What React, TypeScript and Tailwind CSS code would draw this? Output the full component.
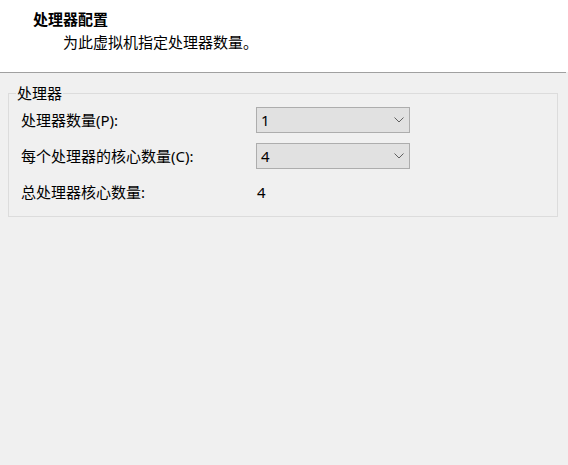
import React from "react";

function Chevron() {
  return (
    <svg width="10" height="6" viewBox="0 0 10 6" className="shrink-0">
      <polyline points="0.5,0.5 5,5 9.5,0.5" fill="none" stroke="#606060" strokeWidth="1" />
    </svg>
  );
}

function Combo({ value }: { value: string }) {
  return (
    <div className="flex items-center justify-between w-[154px] h-[26px] border border-[#adadad] bg-[#e1e1e1] pl-[4px] pr-[5px] text-black">
      <span className="leading-[20px]">{value}</span>
      <Chevron />
    </div>
  );
}

export default function App() {
  return (
    <div
      className="w-[568px] h-[465px] bg-[#f0f0f0] text-[15px] text-black overflow-hidden"
      style={{ fontFamily: '"Noto Sans", "Noto Sans CJK SC", sans-serif' }}
    >
      <div className="bg-white h-[72px] pt-[9px]">
        <div className="pl-[33px] font-bold leading-[20px]">处理器配置</div>
        <div className="pl-[63px] mt-[3px] leading-[20px]">为此虚拟机指定处理器数量。</div>
      </div>
      <div className="w-[566px] h-px bg-[#a0a0a0]" />
      <div className="pt-[20px] pl-[8px]">
        <div className="relative w-[550px] border border-[#dcdcdc] pt-[13px] pb-[11px] pl-[12px] flex flex-col gap-[10px]">
          <span className="absolute left-[7px] top-[-11px] px-[1px] bg-[#f0f0f0] leading-[20px]">处理器</span>
          <div className="flex items-center h-[26px]">
            <span className="w-[235px] leading-[20px]">处理器数量(P):</span>
            <Combo value="1" />
          </div>
          <div className="flex items-center h-[26px]">
            <span className="w-[235px] leading-[20px]">每个处理器的核心数量(C):</span>
            <Combo value="4" />
          </div>
          <div className="flex items-center h-[26px]">
            <span className="w-[235px] leading-[20px]">总处理器核心数量:</span>
            <span className="leading-[20px] pl-[1px]">4</span>
          </div>
        </div>
      </div>
    </div>
  );
}
